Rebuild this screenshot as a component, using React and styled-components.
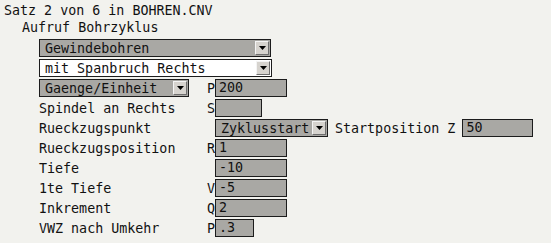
import React from 'react';
import styled, { createGlobalStyle } from 'styled-components';

const GlobalStyle = createGlobalStyle`
	html, body {
		margin: 0;
		padding: 0;
		background: #f2f2ee;
	}
	body {
		font-family: "DejaVu Sans Mono", "Liberation Mono", monospace;
		font-size: 13.33px;
		color: #111;
	}
`;

const fields = [
	{ label: 'Spindel an Rechts', letter: 'S', value: '', width: 47 },
	{ label: 'Rueckzugspunkt', letter: '', select: 'Zyklusstart' },
	{ label: 'Rueckzugsposition', letter: 'R', value: '1', width: 72 },
	{ label: 'Tiefe', letter: '', value: '-10', width: 72 },
	{ label: '1te Tiefe', letter: 'V', value: '-5', width: 72 },
	{ label: 'Inkrement', letter: 'Q', value: '2', width: 72 },
	{ label: 'VWZ nach Umkehr', letter: 'P', value: '.3', width: 39 },
];

function App() {
	return (
		<Page>
			<GlobalStyle />
			<Title>Satz 2 von 6 in BOHREN.CNV</Title>
			<Sub>Aufruf Bohrzyklus</Sub>
			<Form>
				<Wide>
					<Dropdown value="Gewindebohren" width={ 232 } />
				</Wide>
				<Wide>
					<Dropdown value="mit Spanbruch Rechts" width={ 233 } light />
				</Wide>
				<Dropdown value="Gaenge/Einheit" width={ 150 } />
				<Letter>P</Letter>
				<Field width={ 72 }>200</Field>
				{ fields.map( f => (
					<React.Fragment key={ f.label }>
						<Label>{ f.label }</Label>
						<Letter>{ f.letter }</Letter>
						{ f.select ? (
							<Inline>
								<Dropdown value={ f.select } width={ 113 } />
								<span>Startposition Z</span>
								<Field width={ 71 }>50</Field>
							</Inline>
						) : (
							<Field width={ f.width }>{ f.value }</Field>
						) }
					</React.Fragment>
				) ) }
			</Form>
		</Page>
	);
}

function Dropdown( { value, width, light } ) {
	return (
		<SelectBox width={ width } light={ light ? 1 : 0 }>
			<span>{ value }</span>
			<Arrow>
				<svg width="7" height="4" viewBox="0 0 7 4">
					<path d="M0 0h7L3.5 4z" fill="#000" />
				</svg>
			</Arrow>
		</SelectBox>
	);
}

const Page = styled.div`
	padding: 2px 4px;
	line-height: 17px;
`;
const Title = styled.div`
	white-space: pre;
`;
const Sub = styled.div`
	padding-left: 18px;
`;
const Form = styled.div`
	display: grid;
	grid-template-columns: 167px 9px auto;
	grid-auto-rows: 18px;
	row-gap: 2px;
	padding: 3px 0 0 35px;
	align-items: center;
`;
const Wide = styled.div`
	grid-column: 1 / -1;
`;
const Label = styled.div`
	white-space: pre;
	padding-left: 0;
`;
const Letter = styled.div`
	text-align: right;
	white-space: pre;
`;
const Inline = styled.div`
	display: flex;
	align-items: center;
	gap: 7px;
	white-space: pre;
`;
const SelectBox = styled.div`
	box-sizing: border-box;
	width: ${ p => p.width }px;
	height: 18px;
	display: flex;
	align-items: center;
	justify-content: space-between;
	padding: 0 1px 0 5px;
	border: 1px solid #1c1c1c;
	background: ${ p => p.light ? '#ffffff' : '#a9a8a4' };
	white-space: pre;
`;
const Arrow = styled.div`
	box-sizing: border-box;
	width: 14px;
	height: 14px;
	display: flex;
	align-items: center;
	justify-content: center;
	background: #d6d3ce;
	border-top: 1px solid #f4f4f4;
	border-left: 1px solid #f4f4f4;
	border-right: 1px solid #6e6e6e;
	border-bottom: 1px solid #6e6e6e;
`;
const Field = styled.div`
	box-sizing: border-box;
	width: ${ p => p.width }px;
	height: 18px;
	padding: 0 3px;
	border: 1px solid #1c1c1c;
	background: #a9a8a4;
	line-height: 16px;
	white-space: pre;
`;

export default App;
